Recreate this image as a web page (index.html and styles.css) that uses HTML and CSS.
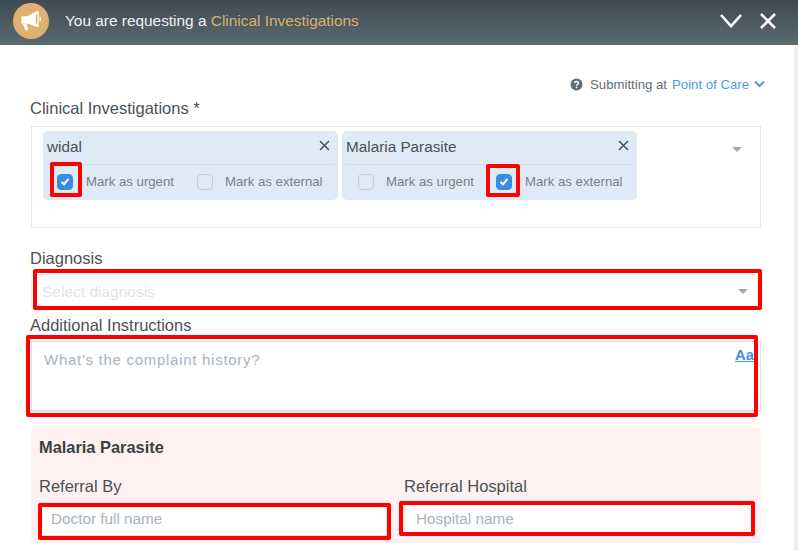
FILE: index.html
```html
<!DOCTYPE html>
<html lang="en">
<head>
<meta charset="utf-8">
<title>Clinical Investigations request</title>
<link rel="stylesheet" href="styles.css">
</head>
<body>
<header class="topbar">
  <div class="topbar-left">
    <span class="badge">
      <svg width="26" height="26" viewBox="0 0 26 26"><path fill="#fff" d="M18.6 3.2 20.8 3.6V18.4L18.6 18.8 9.2 15.4H3.4V8.2H9.2ZM4.8 15.8H8.6L10.4 21.8 7.4 22.6Z"/><path fill="#e0b070" d="M17.8 6.4V15.6L19.4 15.9V6.1Z"/><path fill="#fff" d="M21.6 8.6 23 9.2V13L21.6 13.6Z"/></svg>
    </span>
    <span class="topbar-title">You are requesting a <span class="accent">Clinical Investigations</span></span>
  </div>
  <div class="topbar-actions">
    <svg width="24" height="16" viewBox="0 0 24 16"><path d="M2 2 12 13 22 2" fill="none" stroke="#fff" stroke-width="2.6"/></svg>
    <svg width="18" height="18" viewBox="0 0 18 18"><path d="M2 2 16 16M16 2 2 16" fill="none" stroke="#fff" stroke-width="2.6"/></svg>
  </div>
</header>
<div class="shell">
  <main class="content">
    <div class="submit-row">
      <svg class="help" width="13" height="13" viewBox="0 0 12 12"><circle cx="6" cy="6" r="5.5" fill="#5f6b75"/><path d="M4.2 4.7C4.3 2.7 7.9 2.8 7.8 4.7 7.8 6 6 5.9 6 7.2" fill="none" stroke="#fff" stroke-width="1.3"/><rect x="5.3" y="8" width="1.4" height="1.4" fill="#fff"/></svg>
      <span class="submit-label">Submitting at</span>
      <span class="submit-link">Point of Care</span>
      <svg width="11" height="8" viewBox="0 0 11 8"><path d="M1 1.5 5.5 6 10 1.5" fill="none" stroke="#4a9ee8" stroke-width="2"/></svg>
    </div>

    <label class="field-label inv-label">Clinical Investigations *</label>
    <section class="multi">
      <div class="chips">
        <article class="chip chip-a">
          <div class="chip-head"><span class="chip-name">widal</span><svg width="11" height="11" viewBox="0 0 11 11"><path d="M1 1 10 10M10 1 1 10" fill="none" stroke="#44505a" stroke-width="1.5"/></svg></div>
          <div class="chip-opts">
            <span class="opt opt-first"><span class="box on"><svg width="10" height="9" viewBox="0 0 10 9"><path d="M1.5 5 4 7.2 8.5 1.8" fill="none" stroke="#fff" stroke-width="2"/></svg></span>Mark as urgent</span>
            <span class="opt"><span class="box"></span>Mark as external</span>
          </div>
        </article>
        <article class="chip chip-b">
          <div class="chip-head"><span class="chip-name">Malaria Parasite</span><svg width="11" height="11" viewBox="0 0 11 11"><path d="M1 1 10 10M10 1 1 10" fill="none" stroke="#44505a" stroke-width="1.5"/></svg></div>
          <div class="chip-opts">
            <span class="opt opt-first"><span class="box"></span>Mark as urgent</span>
            <span class="opt"><span class="box on"><svg width="10" height="9" viewBox="0 0 10 9"><path d="M1.5 5 4 7.2 8.5 1.8" fill="none" stroke="#fff" stroke-width="2"/></svg></span>Mark as external</span>
          </div>
        </article>
      </div>
      <span class="caret multi-caret"></span>
    </section>

    <label class="field-label diag-label">Diagnosis</label>
    <div class="select"><span class="select-ph">Select diagnosis</span><span class="caret"></span></div>

    <label class="field-label add-label">Additional Instructions</label>
    <div class="textarea"><span class="textarea-ph">What's the complaint history?</span><span class="aa">Aa</span></div>

    <section class="panel">
      <h2 class="panel-title">Malaria Parasite</h2>
      <div class="panel-grid">
        <div>
          <label class="field-label">Referral By</label>
          <div class="input">Doctor full name</div>
        </div>
        <div>
          <label class="field-label">Referral Hospital</label>
          <div class="input">Hospital name</div>
        </div>
      </div>
    </section>
    <div class="rule"></div>
  </main>
  <div class="scrollbar"></div>
</div>

<div class="mark m1"></div>
<div class="mark m2"></div>
<div class="mark m3"></div>
<div class="mark m4"></div>
<div class="mark m5"></div>
<div class="mark m6"></div>
</body>
</html>
```
FILE: styles.css
```css
* { box-sizing: border-box; }
html, body { margin: 0; height: 100%; }
body {
  width: 798px;
  height: 551px;
  overflow: hidden;
  position: relative;
  background: #fff;
  font-family: "Liberation Sans", Arial, sans-serif;
  color: #4a5158;
}
.topbar {
  height: 45px;
  background: linear-gradient(#3e4a51, #5b6a72);
  display: flex;
  justify-content: space-between;
  align-items: center;
  padding: 0 21px 4px 13px;
}
.topbar-left { display: flex; align-items: center; gap: 16px; }
.badge {
  width: 36px;
  height: 36px;
  border-radius: 50%;
  background: #e0b070;
  display: flex;
  align-items: center;
  justify-content: center;
}
.topbar-title { font-size: 15.4px; color: #f0f2f3; }
.accent { color: #dcb06f; }
.topbar-actions { display: flex; align-items: center; gap: 16px; }
.shell { display: flex; height: 506px; }
.content { width: 794px; padding: 0 33px 0 31px; }
.scrollbar { width: 4px; background: #eeeeee; }
.submit-row {
  display: flex;
  justify-content: flex-end;
  align-items: center;
  height: 16px;
  margin: 31px -4px 0 0;
  font-size: 13.2px;
}
.help { margin-right: 7px; }
.submit-label { color: #646d75; margin-right: 5px; }
.submit-link { color: #4a9ee8; margin-right: 5px; }
.field-label { display: block; font-size: 16.5px; line-height: 18px; color: #4b5157; }
.content > .field-label { margin-left: -1px; }
.inv-label { margin-top: 7px; }
.multi {
  position: relative;
  height: 102px;
  margin-top: 9px;
  border: 1px solid #e6e6e6;
  padding: 4px 11px;
}
.chips { display: flex; gap: 4px; }
.chip {
  width: 295px;
  height: 69px;
  background: #deebf6;
  border-radius: 5px;
  padding: 0 4px;
}
.chip-head {
  height: 34px;
  display: flex;
  justify-content: space-between;
  align-items: center;
  padding-right: 4px;
  font-size: 15.3px;
  color: #4a5158;
  border-bottom: 1px solid #d3dde6;
}
.chip-name { padding-bottom: 2px; }
.chip-head svg { position: relative; top: -2px; }
.chip-opts { display: flex; align-items: center; height: 33px; font-size: 13.2px; color: #76808b; }
.opt { display: flex; align-items: center; }
.opt-first { width: 150px; }
.chip-a .opt-first { padding-left: 10px; }
.chip-b .opt-first { padding-left: 12px; }
.box {
  width: 16px;
  height: 16px;
  border: 1px solid #c9ced3;
  border-radius: 4px;
  margin-right: 12px;
  display: flex;
  align-items: center;
  justify-content: center;
}
.box.on { background: #368de0; border-color: #368de0; margin-right: 13px; }
.caret {
  width: 0;
  height: 0;
  border-left: 5px solid transparent;
  border-right: 5px solid transparent;
  border-top: 5px solid #a8a8a8;
}
.multi-caret { position: absolute; right: 18px; top: 20px; }
.diag-label { margin-top: 21px; }
.select {
  height: 35px;
  margin-top: 7px;
  border: 1px solid #f2f2f2;
  display: flex;
  justify-content: space-between;
  align-items: center;
  padding: 0 12px 0 10px;
}
.select-ph { font-size: 15.5px; color: #dfe3ea; }
.add-label { margin-top: 7px; }
.textarea {
  height: 71px;
  margin-top: 7px;
  border: 1px solid #e0e0e0;
  border-bottom-width: 2px;
  border-radius: 2px;
  display: flex;
  justify-content: space-between;
  align-items: flex-start;
  padding: 10px 6px 0 12px;
}
.textarea-ph { font-size: 15px; line-height: 16px; letter-spacing: 0.72px; color: #a8b2c0; }
.aa { font-size: 14.8px; font-weight: bold; color: #3f92dd; text-decoration: underline; line-height: 16px; position: relative; top: -5px; }
.panel {
  height: 114px;
  margin-top: 16px;
  background: #fff0f2;
  border-radius: 5px;
  padding: 0 8px;
}
.panel-title { margin: 0; padding-top: 10px; font-size: 16.4px; line-height: 18px; color: #3c4043; font-weight: bold; }
.panel-grid { display: grid; grid-template-columns: 348px 349px; gap: 17px; margin-top: 22px; }
.panel-grid .field-label { line-height: 17px; }
.input {
  height: 34px;
  margin-top: 7px;
  background: #fff;
  border: 1px solid #e4e4e4;
  font-size: 15.3px;
  color: #a8b2c0;
  padding: 0 11px;
  display: flex;
  align-items: center;
}
.rule { height: 1px; background: #f0f0f0; }
.mark { position: absolute; border: 4px solid #ff0000; border-radius: 2px; }
.m1 { left: 50px; top: 162px; width: 32px; height: 35px; }
.m2 { left: 486px; top: 164px; width: 34px; height: 33px; }
.m3 { left: 33px; top: 269px; width: 729px; height: 41px; }
.m4 { left: 26px; top: 335px; width: 732px; height: 82px; }
.m5 { left: 38px; top: 503px; width: 353px; height: 37px; }
.m6 { left: 399px; top: 501px; width: 356px; height: 35px; }
```
